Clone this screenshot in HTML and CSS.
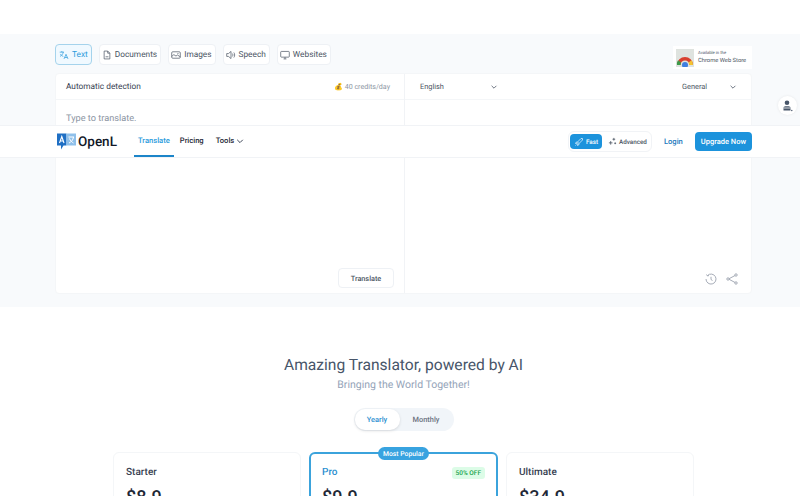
FILE: index.html
```html
<!DOCTYPE html>
<html lang="en">
<head>
<meta charset="utf-8">
<title>OpenL Translate</title>
<link rel="stylesheet" href="styles.css">
</head>
<body>
<header class="navbar">
    <div class="nav-left">
        <a class="logo">
            <svg width="19" height="19" viewBox="0 0 19 19">
                <path d="M0 1.500h9.500v12H6.500L4 17.500V13.500H0z" fill="#1f6fc4"/>
                <path d="M9.500 1.500H19V13.500H9.500z" fill="#8fc0ea"/>
                <path d="M2.500 11L4.800 4.500 7 11M3.300 9h3" fill="none" stroke="#fff" stroke-width="1.100"/>
                <path d="M11.500 5h5.500M12 11c2.500-1 4-3 4.500-6M12.500 6.500c.8 2 2.200 3.500 4 4.500" fill="none" stroke="#fff" stroke-width="1"/>
            </svg>
            <span>OpenL</span>
        </a>
        <nav class="nav-links">
            <a class="nav-link active">Translate</a>
            <a class="nav-link">Pricing</a>
            <a class="nav-link">Tools
                <svg width="8" height="8" viewBox="0 0 10 10"><path d="M1.500 3.500L5 7l3.500-3.500" fill="none" stroke="#374151" stroke-width="1.200"/></svg>
            </a>
        </nav>
    </div>
    <div class="nav-right">
        <div class="mode-switch">
            <span class="mode mode-on">
                <svg width="10" height="10" viewBox="0 0 10 10"><path d="M3.500 5L7 1.500h1.500V3L5 6.500zM3.500 5L2 5.300 1.500 6.500l2-.300M5 6.500L4.700 8 3.500 8.500l.3-2M1.500 8.500l1-1" fill="none" stroke="#d8eefb" stroke-width=".8"/></svg>
                Fast</span>
            <span class="mode">
                <svg width="9" height="9" viewBox="0 0 10 10"><path d="M6.500 1v3M5 2.500h3M3 4.500v4M1 6.500h4M8 6v2M7 7h2" fill="none" stroke="#4b5563" stroke-width=".9"/></svg>
                Advanced</span>
        </div>
        <a class="login">Login</a>
        <a class="upgrade">Upgrade Now</a>
    </div>
</header>

<section class="translator">
    <div class="toolbar">
        <div class="tabs">
            <a class="tab tab-on">
                <svg class="tab-icon" viewBox="0 0 14 14"><path d="M1 3h6M4 1.500V3M2 5.500c1 2 2.500 3 4 3.500M6 3c-.5 2.500-2 4.500-4.500 6M7 12.500l2.800-6.500 2.800 6.500M8 10.500h3.600" fill="none" stroke="currentColor"/></svg>
                Text</a>
            <a class="tab">
                <svg class="tab-icon" viewBox="0 0 14 14"><path d="M3 1.500h5l3 3v8H3zM8 1.500v3h3M5 9.500h4" fill="none" stroke="currentColor"/></svg>
                Documents</a>
            <a class="tab">
                <svg class="tab-icon" viewBox="0 0 14 14"><rect x="1" y="2.500" width="12" height="9" rx="1.500" fill="none" stroke="currentColor"/><path d="M1 9l3-2.500 3 2 2-1.500 4 2.500M9 5h1.500" fill="none" stroke="currentColor"/></svg>
                Images</a>
            <a class="tab">
                <svg class="tab-icon" viewBox="0 0 14 14"><path d="M1 5v4h2.500L7 12V2L3.500 5zM9 5c.8 1.200.8 2.800 0 4M11 3.500c1.500 2 1.500 5 0 7" fill="none" stroke="currentColor"/></svg>
                Speech</a>
            <a class="tab">
                <svg class="tab-icon" viewBox="0 0 14 14"><rect x="1" y="2" width="12" height="8" rx="1" fill="none" stroke="currentColor"/><path d="M5 12.500h4M7 10v2.500" fill="none" stroke="currentColor"/></svg>
                Websites</a>
        </div>
        <a class="store-badge">
            <svg class="store-icon" width="18" height="18" viewBox="0 0 18 18">
                <rect width="18" height="18" fill="#dfe3df"/>
                <path d="M1 16a8 8 0 0 1 16 0h-3.500a4.500 4.500 0 0 0-9 0z" fill="#d8402f"/>
                <path d="M13.500 16h3.500a8 8 0 0 0-1.500-4.700l-3 2.200z" fill="#f4c430"/>
                <path d="M1 16h3.500l.5-2.500-3-2.200A8 8 0 0 0 1 16z" fill="#3c9a4a"/>
                <circle cx="9" cy="16" r="3" fill="#3f7fe0"/>
            </svg>
            <span class="store-text">
                <span class="store-small">Available in the</span>
                <span class="store-big">Chrome Web Store</span>
            </span>
        </a>
    </div>

    <div class="panel">
        <div class="pane pane-left">
            <div class="pane-head">
                <span class="lang-strong">Automatic detection</span>
                <span class="credits">💰 40 credits/day</span>
            </div>
            <div class="pane-body">
                <p class="placeholder">Type to translate.</p>
                <div class="pane-foot foot-end">
                    <a class="translate-btn">Translate</a>
                </div>
            </div>
        </div>
        <div class="pane">
            <div class="pane-head">
                <span class="select select-lang">English
                    <svg width="8" height="8" viewBox="0 0 10 10"><path d="M2 3.500L5 6.500l3-3" fill="none" stroke="#6b7280" stroke-width="1.200"/></svg>
                </span>
                <span class="select select-style">General
                    <svg width="8" height="8" viewBox="0 0 10 10"><path d="M2 3.500L5 6.500l3-3" fill="none" stroke="#6b7280" stroke-width="1.200"/></svg>
                </span>
            </div>
            <div class="pane-body">
                <div class="pane-foot foot-icons">
                    <svg width="12" height="12" viewBox="0 0 12 12"><path d="M2.500 2.500A5 5 0 1 1 1 6M1.500 1.500l1 1.500 1.500-.5" fill="none" stroke="#9ca3af" stroke-width=".9"/><path d="M6 3.800V6.500l1.500 1" fill="none" stroke="#9ca3af" stroke-width=".9"/></svg>
                    <svg width="12" height="12" viewBox="0 0 12 12"><path d="M10 2L2.500 6 10 10" fill="none" stroke="#9ca3af" stroke-width=".9"/><circle cx="10" cy="2" r="1.200" fill="#fff" stroke="#9ca3af" stroke-width=".9"/><circle cx="2" cy="6" r="1.200" fill="#fff" stroke="#9ca3af" stroke-width=".9"/><circle cx="10" cy="10" r="1.200" fill="#fff" stroke="#9ca3af" stroke-width=".9"/></svg>
                </div>
            </div>
        </div>
    </div>
</section>

<a class="float-btn">
    <svg width="11" height="12" viewBox="0 0 11 12"><circle cx="5" cy="2.800" r="2.300" fill="#475569"/><path d="M1.500 10.500V8c0-1 .8-1.800 1.800-1.800h3.400C7.700 6.200 8.500 7 8.500 8v2.500z" fill="#475569"/><path d="M1.500 8h7" stroke="#fff" stroke-width=".8"/><circle cx="9.800" cy="10.500" r=".7" fill="#475569"/></svg>
</a>

<section class="pricing">
    <h1>Amazing Translator, powered by AI</h1>
    <p class="tagline">Bringing the World Together!</p>
    <div class="billing">
        <span class="billing-opt billing-on">Yearly</span>
        <span class="billing-opt">Monthly</span>
    </div>
    <div class="plans">
        <div class="plan">
            <div class="plan-name">Starter</div>
            <div class="plan-price">$8.9</div>
        </div>
        <div class="plan plan-pro">
            <span class="popular">Most Popular</span>
            <div class="plan-top">
                <div class="plan-name">Pro</div>
                <span class="off">50% OFF</span>
            </div>
            <div class="plan-price">$9.9</div>
        </div>
        <div class="plan">
            <div class="plan-name">Ultimate</div>
            <div class="plan-price">$34.9</div>
        </div>
    </div>
</section>
</body>
</html>
```

FILE: styles.css
```css
html, body {
    margin: 0;
    height: 496px;
    overflow: hidden;
    background-color: #fff;
    font-family: Roboto, "Noto Sans", sans-serif;
    text-rendering: geometricPrecision;
    color: #374151;
}

a {
    text-decoration: none;
}

/* navbar sits over the translator, it is sticky on the real page */
.navbar {
    position: absolute;
    top: 125px;
    left: 0;
    right: 0;
    height: 33px;
    padding: 0 48px 0 57px;
    display: flex;
    justify-content: space-between;
    align-items: center;
    background-color: #fff;
    border-top: 1px solid #f1f3f6;
    border-bottom: 1px solid #f1f3f6;
    box-sizing: border-box;
    z-index: 5;
}

.nav-left, .nav-right {
    display: flex;
    align-items: center;
    height: 100%;
}

.logo {
    display: flex;
    align-items: center;
    gap: 2px;
    width: 77px;
    font-size: 13.500px;
    font-weight: 500;
    color: #111827;
}

.nav-links {
    display: flex;
    height: 100%;
}

.nav-link {
    display: flex;
    align-items: center;
    gap: 2px;
    padding: 0 4px;
    margin-right: 2px;
    font-size: 7.600px;
    font-weight: 500;
    color: #1f2937;
    border-bottom: 2px solid transparent;
    box-sizing: border-box;
}

.nav-link:nth-child(2) {
    margin-right: 4px;
}

.nav-link.active {
    color: #2b9bdc;
    border-bottom-color: #1c85c9;
}

.mode-switch {
    display: flex;
    align-items: center;
    padding: 2px 1px;
    border: 1px solid #f1f3f6;
    border-radius: 6px;
    margin-right: 12px;
}

.mode {
    display: flex;
    align-items: center;
    gap: 2px;
    height: 15px;
    padding: 0 3px 0 6px;
    font-size: 6.300px;
    font-weight: 500;
    color: #4b5563;
}

.mode-on {
    background-color: #1c93dc;
    border-radius: 4px;
    color: #fff;
    padding: 0 4px;
}

.login {
    font-size: 7.600px;
    font-weight: 500;
    color: #1c78bd;
    margin-right: 12px;
}

.upgrade {
    display: flex;
    align-items: center;
    height: 19px;
    padding: 0 6px;
    background-color: #1c93dc;
    border-radius: 4px;
    color: #fff;
    font-size: 7.500px;
    font-weight: 500;
}

.translator {
    margin-top: 34px;
    height: 273px;
    padding: 10px 48px 0 55px;
    box-sizing: border-box;
    background-color: #f8fafc;
}

.toolbar {
    display: flex;
    justify-content: space-between;
    align-items: flex-start;
    height: 29px;
}

.tabs {
    display: flex;
    gap: 7px;
}

.tab {
    display: flex;
    align-items: center;
    gap: 3px;
    height: 21px;
    padding: 0 3px 0 2px;
    font-size: 8.300px;
    color: #4b5563;
    background-color: #fff;
    border: 1px solid #eef1f5;
    border-radius: 4px;
    box-sizing: border-box;
}

.tab-icon {
    width: 10px;
    height: 10px;
    stroke-width: 1;
}

.tab-on {
    color: #2b9bdc;
    background-color: #f0f9ff;
    border-color: #a5d3ec;
    padding: 0 3px;
}

.store-badge {
    display: flex;
    align-items: center;
    gap: 4px;
    width: 79px;
    height: 23px;
    margin-top: 2px;
    padding: 0 3px;
    background-color: #fff;
    box-sizing: border-box;
}

.store-icon {
    flex: none;
}

.store-text {
    display: flex;
    flex-direction: column;
}

.store-small {
    font-size: 4.200px;
    line-height: 6px;
    color: #4b5563;
}

.store-big {
    font-size: 5.800px;
    line-height: 8px;
    color: #4b5563;
    white-space: nowrap;
}

.panel {
    display: flex;
    height: 221px;
    background-color: #fff;
    border-radius: 4px;
    border: 1px solid #f4f6f8;
    box-sizing: border-box;
}

.pane {
    flex: 1;
    display: flex;
    flex-direction: column;
}

.pane-left {
    flex: none;
    width: 349px;
    border-right: 1px solid #f1f3f6;
    box-sizing: border-box;
}

.pane-head {
    display: flex;
    justify-content: space-between;
    align-items: center;
    height: 26px;
    padding: 0 11px 0 10px;
    border-bottom: 1px solid #f4f6f8;
    box-sizing: border-box;
}

.lang-strong {
    font-size: 8.300px;
    color: #374151;
}

.credits {
    font-size: 7.100px;
    color: #8c95a3;
    margin-right: 3px;
}

.select {
    display: flex;
    justify-content: space-between;
    align-items: center;
    font-size: 7.400px;
    color: #4b5563;
}

.select-lang {
    width: 78px;
    margin-left: 5px;
}

.select-style {
    width: 55px;
    margin-right: 3px;
}

.pane-body {
    flex: 1;
    display: flex;
    flex-direction: column;
    justify-content: flex-end;
    padding: 0 10px 5px;
    position: relative;
}

.placeholder {
    margin: 0;
    position: absolute;
    top: 13px;
    left: 10px;
    font-size: 9.200px;
    color: #8c95a3;
}

.pane-foot {
    display: flex;
    align-items: center;
}

.foot-end {
    justify-content: flex-end;
}

.foot-icons {
    justify-content: flex-end;
    gap: 9px;
    padding-bottom: 3px;
    padding-right: 3px;
}

.translate-btn {
    display: flex;
    align-items: center;
    justify-content: center;
    width: 56px;
    height: 20px;
    font-size: 7.300px;
    font-weight: 500;
    color: #4b5563;
    border: 1px solid #eef1f5;
    border-radius: 4px;
    box-sizing: border-box;
}

.float-btn {
    position: absolute;
    top: 96px;
    left: 778px;
    width: 19px;
    height: 19px;
    display: flex;
    align-items: center;
    justify-content: center;
    background-color: #fff;
    border-radius: 50%;
    box-shadow: 0 0 3px rgba(0, 0, 0, 0.08);
}

.pricing {
    display: flex;
    flex-direction: column;
    align-items: center;
    padding: 47px 0 0 7px;
}

.pricing h1 {
    margin: 0;
    font-size: 15.600px;
    line-height: 22px;
    font-weight: 400;
    color: #475569;
}

.tagline {
    margin: 0;
    font-size: 10.500px;
    line-height: 18px;
    color: #94a3b8;
}

.billing {
    display: flex;
    margin-top: 14px;
    padding: 1px;
    width: 100px;
    height: 23px;
    background-color: #f1f5f9;
    border-radius: 12px;
    box-sizing: border-box;
}

.billing-opt {
    flex: 1;
    display: flex;
    align-items: center;
    justify-content: center;
    font-size: 7.400px;
    font-weight: 500;
    color: #6b7280;
}

.billing-on {
    flex: none;
    width: 45px;
    background-color: #fff;
    color: #2b8fd0;
    border-radius: 10px;
    box-shadow: 0 1px 3px rgba(0, 0, 0, 0.12);
}

.plans {
    display: flex;
    gap: 8px;
    margin-top: 21px;
}

.plan {
    width: 188px;
    height: 120px;
    padding: 12px 12px;
    background-color: #fff;
    border: 1px solid #f4f6f8;
    border-radius: 6px;
    box-sizing: border-box;
    position: relative;
}

.plan-pro {
    width: 189px;
    border: 2px solid #3ba3dc;
    padding: 11px 11px;
}

.plan-top {
    display: flex;
    justify-content: space-between;
    align-items: center;
}

.plan-name {
    font-size: 10px;
    line-height: 15px;
    font-weight: 500;
    color: #374151;
}

.plan-pro .plan-name {
    color: #2b8fd0;
}

.plan-price {
    margin-top: 7px;
    font-size: 18px;
    line-height: 22px;
    font-weight: 500;
    color: #1f2937;
}

.popular {
    position: absolute;
    top: -7px;
    left: 67px;
    display: flex;
    align-items: center;
    height: 13px;
    padding: 0 5px;
    background-color: #38a3e0;
    border-radius: 7px;
    color: #fff;
    font-size: 6.800px;
    font-weight: 500;
    white-space: nowrap;
}

.off {
    display: flex;
    align-items: center;
    height: 12px;
    padding: 0 4px;
    background-color: #dcfce7;
    border-radius: 3px;
    color: #16a34a;
    font-size: 6.500px;
    font-weight: 500;
}
```
